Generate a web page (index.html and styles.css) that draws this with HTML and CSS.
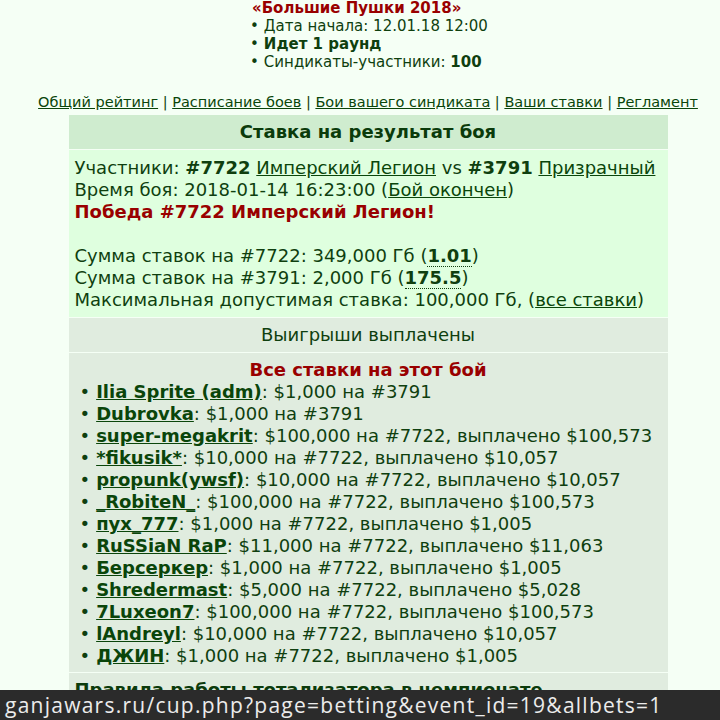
FILE: index.html
```html
<!DOCTYPE html>
<html lang="ru">
<head>
<meta charset="utf-8">
<title>Тотализатор — Большие Пушки 2018</title>
<link rel="stylesheet" href="styles.css">
</head>
<body>
<div class="page">
  <ul class="event">
    <li class="event-title">«Большие Пушки 2018»</li>
    <li class="dot">Дата начала: 12.01.18 12:00</li>
    <li class="dot"><b>Идет 1 раунд</b></li>
    <li class="dot">Синдикаты-участники: <b>100</b></li>
  </ul>

  <nav class="menu">
    <a href="#">Общий рейтинг</a> | <a href="#">Расписание боев</a> | <a href="#">Бои вашего синдиката</a> | <a href="#">Ваши ставки</a> | <a href="#">Регламент</a>
  </nav>

  <div class="board">
    <div class="board-head">Ставка на результат боя</div>
    <div class="board-info">
      Участники: <b>#7722</b> <a href="#">Имперский Легион</a> vs <b>#3791</b> <a href="#">Призрачный</a><br>
      Время боя: 2018-01-14 16:23:00 (<a href="#">Бой окончен</a>)<br>
      <span class="win">Победа #7722 Имперский Легион!</span><br>
      <br>
      Сумма ставок на #7722: 349,000 Гб (<abbr class="odds" title="коэффициент">1.01</abbr>)<br>
      Сумма ставок на #3791: 2,000 Гб (<abbr class="odds" title="коэффициент">175.5</abbr>)<br>
      Максимальная допустимая ставка: 100,000 Гб, (<a href="#">все ставки</a>)
    </div>
    <div class="board-status">Выигрыши выплачены</div>
    <div class="board-bets">
      <div class="bets-title">Все ставки на этот бой</div>
      <ul class="bets">
        <li><a href="#">Ilia Sprite (adm)</a>: $1,000 на #3791</li>
        <li><a href="#">Dubrovka</a>: $1,000 на #3791</li>
        <li><a href="#">super-megakrit</a>: $100,000 на #7722, выплачено $100,573</li>
        <li><a href="#">*fikusik*</a>: $10,000 на #7722, выплачено $10,057</li>
        <li><a href="#">propunk(ywsf)</a>: $10,000 на #7722, выплачено $10,057</li>
        <li><a href="#">_RobiteN_</a>: $100,000 на #7722, выплачено $100,573</li>
        <li><a href="#">пух_777</a>: $1,000 на #7722, выплачено $1,005</li>
        <li><a href="#">RuSSiaN RaP</a>: $11,000 на #7722, выплачено $11,063</li>
        <li><a href="#">Берсеркер</a>: $1,000 на #7722, выплачено $1,005</li>
        <li><a href="#">Shredermast</a>: $5,000 на #7722, выплачено $5,028</li>
        <li><a href="#">7Luxeon7</a>: $100,000 на #7722, выплачено $100,573</li>
        <li><a href="#">lAndreyl</a>: $10,000 на #7722, выплачено $10,057</li>
        <li><a href="#">ДЖИН</a>: $1,000 на #7722, выплачено $1,005</li>
      </ul>
    </div>
    <div class="board-rules">Правила работы тотализатора в чемпионате</div>
  </div>
</div>

<div class="statusbar">ganjawars.ru/cup.php?page=betting&amp;event_id=19&amp;allbets=1</div>
</body>
</html>
```

FILE: styles.css
```css
html, body {
  margin: 0;
  padding: 0;
  background: #f5fff5;
  overflow: hidden;
}

body {
  font-family: "DejaVu Sans", Verdana, sans-serif;
  color: #0f3f0f;
}

.page {
  padding-left: 16px;
  display: flex;
  flex-direction: column;
  align-items: center;
}

a {
  color: #0a450a;
  text-decoration: underline;
}

/* tournament summary above the menu */
.event {
  list-style: none;
  margin: -1px 0 0 0;
  padding: 0;
  align-self: flex-start;
  margin-left: 234px;
  font-size: 15px;
  line-height: 18px;
}

.event-title {
  color: #990000;
  font-weight: bold;
  padding-left: 2px;
}

.dot::before {
  content: "•";
  margin-right: 5px;
}

.menu {
  margin-top: 22px;
  font-size: 14.5px;
  line-height: 18px;
  white-space: nowrap;
}

/* betting table */
.board {
  margin-top: 4px;
  width: 599px;
  display: flex;
  flex-direction: column;
  gap: 1px;
  font-size: 18px;
  line-height: 22px;
}

.board-head {
  background: #cfeccf;
  height: 34px;
  display: flex;
  align-items: center;
  justify-content: center;
  font-weight: bold;
  color: #0b3b0b;
}

.board-info {
  background: #dfffdf;
  padding: 7px 6px 6px;
  white-space: nowrap;
}

.win {
  color: #990000;
  font-weight: bold;
}

.odds {
  font-weight: bold;
  text-decoration: none;
  border-bottom: 1px dotted #0f3f0f;
}

.board-status {
  background: #e0ecdf;
  height: 34px;
  display: flex;
  align-items: center;
  justify-content: center;
}

.board-bets {
  background: #e0ecdf;
  padding: 6px 6px 5px;
}

.bets-title {
  text-align: center;
  color: #990000;
  font-weight: bold;
}

.bets {
  list-style: none;
  margin: 0;
  padding: 0 0 0 5px;
  white-space: nowrap;
}

.bets li::before {
  content: "•";
  margin-right: 6px;
}

.bets a {
  font-weight: bold;
}

.board-rules {
  background: #e0ecdf;
  padding: 6px 6px;
  font-weight: bold;
  color: #0b3b0b;
  height: 60px;
}

/* browser link preview strip */
.statusbar {
  position: fixed;
  left: 0;
  right: 0;
  bottom: 0;
  height: 30px;
  background: #2b2b2b;
  color: #ececec;
  font-family: "Open Sans", "Noto Sans", sans-serif;
  font-size: 21px;
  letter-spacing: 1.25px;
  line-height: 30px;
  padding-left: 5px;
  white-space: nowrap;
}
```
